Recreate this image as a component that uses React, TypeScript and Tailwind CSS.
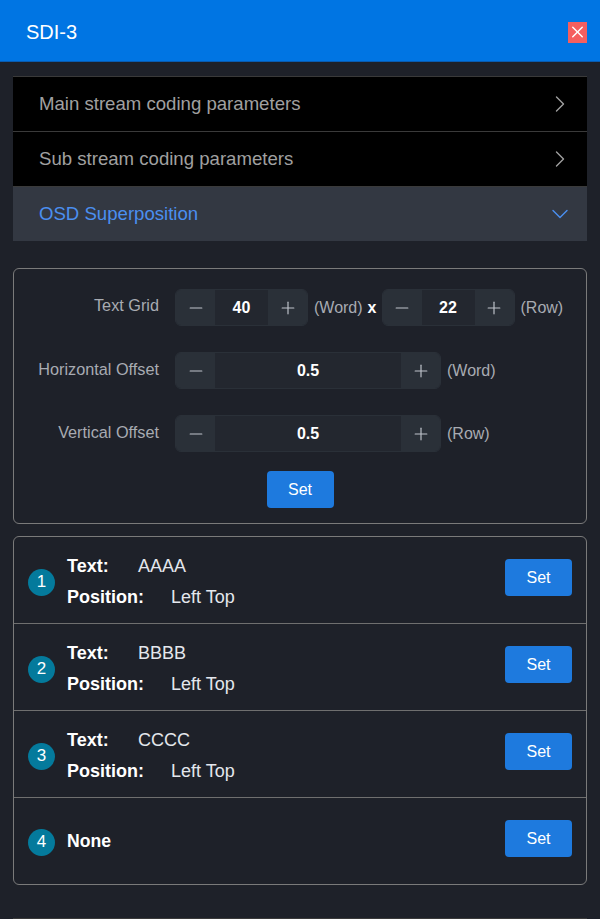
import React from 'react';
import { ChevronRight, ChevronDown, Minus, Plus, X } from 'lucide-react';

const font = { fontFamily: '"Liberation Sans", Arial, sans-serif' };

const Stepper = ({ value, wide }: { value: string; wide?: boolean }) => (
    <div
        className={`flex h-[37px] items-stretch overflow-hidden rounded-md border border-[#2a3038] bg-[#23272f] ${wide ? 'w-[266px]' : 'w-[133px]'}`}
    >
        <div className="flex w-[39px] items-center justify-center bg-[#2a3038] text-[#c0c4cc]">
            <Minus size={20} strokeWidth={1.4} />
        </div>
        <div className="flex flex-1 items-center justify-center text-[16px] font-bold text-white">{value}</div>
        <div className="flex w-[39px] items-center justify-center bg-[#2a3038] text-[#c0c4cc]">
            <Plus size={20} strokeWidth={1.4} />
        </div>
    </div>
);

const SetButton = () => (
    <button className="h-[37px] w-[67px] rounded bg-[#1e7ade] text-[16px] text-white">Set</button>
);

const AccordionRow = ({ title, open }: { title: string; open?: boolean }) => (
    <div
        className={`flex items-center justify-between pl-[26px] pr-[13px] text-[18.6px] ${
            open ? 'h-[54px] bg-[#333842] text-[#4b8ff0]' : 'h-[55px] border-b border-[#3a3a3a] bg-black text-[#a0a0a0]'
        }`}
    >
        <span>{title}</span>
        {open ? <ChevronDown size={28} strokeWidth={1.2} /> : <ChevronRight size={28} strokeWidth={1.2} />}
    </div>
);

const OsdRow = ({ n, text, last }: { n: number; text?: string; last?: boolean }) => (
    <div className={`flex items-center justify-between px-[14px] ${last ? 'h-[86px]' : 'h-[87px] border-b border-[#6f6f6f]'}`}>
        <div className="flex items-center">
            <div
                className={`flex h-[27px] w-[27px] items-center justify-center rounded-full bg-[#047a9c] text-[17px] text-white ${text ? 'mt-[4px]' : 'mt-[2px]'}`}
            >
                {n}
            </div>
            {text ? (
                <div className="ml-[12px] mt-[2px] flex flex-col gap-[9px] text-[18px] leading-[22px] text-[#e4e7ed]">
                    <div className="flex">
                        <span className="w-[71px] font-bold text-white">Text:</span>
                        <span>{text}</span>
                    </div>
                    <div className="flex">
                        <span className="w-[104px] font-bold text-white">Position:</span>
                        <span>Left Top</span>
                    </div>
                </div>
            ) : (
                <div className="ml-[12px] text-[17.6px] font-bold text-white">None</div>
            )}
        </div>
        <div className="mb-[5px]">
            <SetButton />
        </div>
    </div>
);

export default function App() {
    return (
        <div className="h-[919px] w-[600px] overflow-hidden bg-[#1e2129]" style={font}>
            {/* Header */}
            <div className="flex h-[62px] items-center justify-between border-b border-[#0a5cb0] bg-[#0075e3] pl-[26px] pr-[13px] pt-[3px]">
                <span className="text-[20px] text-white">SDI-3</span>
                <div className="flex h-[21px] w-[19px] items-center justify-center bg-[#f55f5f] text-white">
                    <X size={20} strokeWidth={1.8} />
                </div>
            </div>

            <div className="px-[13px] pt-[14px]">
                {/* Accordion */}
                <div className="border-t border-[#3a3a3a]">
                    <AccordionRow title="Main stream coding parameters" />
                    <AccordionRow title="Sub stream coding parameters" />
                    <AccordionRow title="OSD Superposition" open />
                </div>

                {/* Grid settings */}
                <div className="mt-[27px] h-[256px] rounded-md border border-[#7a7a7a] pt-[20px] text-[16.25px]">
                    <div className="flex items-center">
                        <div className="w-[145px] pb-[4px] text-right text-[#a8abb2]">Text Grid</div>
                        <div className="ml-[16px]">
                            <Stepper value="40" />
                        </div>
                        <span className="ml-[6px] text-[16px] text-[#a8abb2]">(Word)</span>
                        <span className="ml-[5px] text-[16px] font-bold text-white">x</span>
                        <div className="ml-[5px]">
                            <Stepper value="22" />
                        </div>
                        <span className="ml-[6px] text-[16px] text-[#a8abb2]">(Row)</span>
                    </div>
                    <div className="mt-[26px] flex items-center">
                        <div className="w-[145px] pb-[3px] text-right text-[#a8abb2]">Horizontal Offset</div>
                        <div className="ml-[16px]">
                            <Stepper value="0.5" wide />
                        </div>
                        <span className="ml-[6px] text-[16px] text-[#a8abb2]">(Word)</span>
                    </div>
                    <div className="mt-[26px] flex items-center">
                        <div className="w-[145px] pb-[3px] text-right text-[#a8abb2]">Vertical Offset</div>
                        <div className="ml-[16px]">
                            <Stepper value="0.5" wide />
                        </div>
                        <span className="ml-[6px] text-[16px] text-[#a8abb2]">(Row)</span>
                    </div>
                    <div className="mt-[19px] flex justify-center">
                        <SetButton />
                    </div>
                </div>

                {/* OSD list */}
                <div className="mt-[12px] rounded-md border border-[#7a7a7a]">
                    <OsdRow n={1} text="AAAA" />
                    <OsdRow n={2} text="BBBB" />
                    <OsdRow n={3} text="CCCC" />
                    <OsdRow n={4} last />
                </div>

                {/* Next accordion edge, cut off by the window */}
                <div className="mt-[33px] h-px bg-[#3a3a3a]" />
            </div>
        </div>
    );
}
